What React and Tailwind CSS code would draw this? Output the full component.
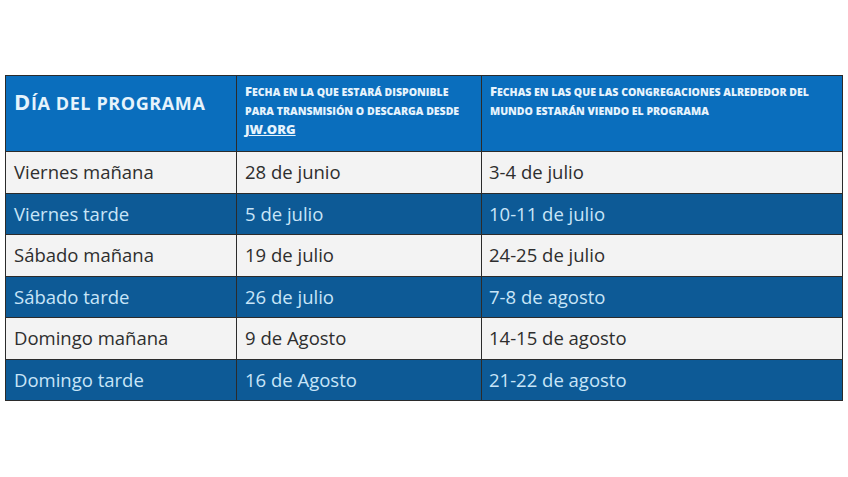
import React from 'react';

const rows = [
  ['Viernes mañana', '28 de junio', '3-4 de julio'],
  ['Viernes tarde', '5 de julio', '10-11 de julio'],
  ['Sábado mañana', '19 de julio', '24-25 de julio'],
  ['Sábado tarde', '26 de julio', '7-8 de agosto'],
  ['Domingo mañana', '9 de Agosto', '14-15 de agosto'],
  ['Domingo tarde', '16 de Agosto', '21-22 de agosto'],
];

// fake small caps: source capitals stay big, the rest is uppercased smaller
function SmallCaps({ text, bigClass, smallClass }) {
  const runs = [];
  for (const ch of text) {
    const isBig = ch !== ch.toLowerCase();
    const last = runs[runs.length - 1];
    if (last && last.big === isBig) last.t += ch;
    else runs.push({ big: isBig, t: ch });
  }
  return runs.map((r, i) => (
    <span key={i} className={r.big ? bigClass : smallClass}>
      {r.t.toUpperCase()}
    </span>
  ));
}

function App() {
  return (
    <div className="w-[848px] h-[477px] bg-white pt-[75px] pl-[5px]" style={{ fontFamily: '"Open Sans", Lato, sans-serif' }}>
      <table className="border-collapse table-fixed w-[837px]">
        <colgroup>
          <col className="w-[231px]" />
          <col className="w-[245px]" />
          <col className="w-[361px]" />
        </colgroup>
        <thead>
          <tr className="h-[76px] bg-[#0a6ebd] text-[#e6f3fc]">
            <th className="border border-[#2b2b2b] align-top text-left pl-[8px] pt-[11px] font-bold leading-[28px] whitespace-nowrap tracking-[0.6px]">
              <SmallCaps text="Día del programa" bigClass="text-[22px]" smallClass="text-[18px]" />
            </th>
            <th className="border border-[#2b2b2b] align-top text-left pl-[8px] pt-[6px] font-extrabold leading-[17px] whitespace-nowrap">
              <SmallCaps text="Fecha en la que estará disponible" bigClass="text-[13px]" smallClass="text-[10.5px]" /><br />
              <SmallCaps text="para transmisión o descarga desde" bigClass="text-[13px]" smallClass="text-[10.5px]" /><br />
              <span className="underline text-[13px]">JW.ORG</span>
            </th>
            <th className="border border-[#2b2b2b] align-top text-left pl-[8px] pt-[6px] font-extrabold leading-[17px] whitespace-nowrap">
              <SmallCaps text="Fechas en las que las congregaciones alrededor del" bigClass="text-[13px]" smallClass="text-[10.5px]" /><br />
              <SmallCaps text="mundo estarán viendo el programa" bigClass="text-[13px]" smallClass="text-[10.5px]" />
            </th>
          </tr>
        </thead>
        <tbody>
          {rows.map((r, i) => {
            const dark = i % 2 === 1;
            return (
              <tr
                key={i}
                className={dark ? 'h-[41.5px] bg-[#0d5a96] text-[#c8e5f8]' : 'h-[41.5px] bg-[#f3f3f3] text-[#2e2e2e]'}
              >
                <td className="border border-[#2b2b2b] pl-[8px] text-[18.5px]">{r[0]}</td>
                <td className="border border-[#2b2b2b] pl-[8px] text-[18.5px]">{r[1]}</td>
                <td className="border border-[#2b2b2b] pl-[7px] text-[18.5px]">{r[2]}</td>
              </tr>
            );
          })}
        </tbody>
      </table>
    </div>
  );
}

export default App;
